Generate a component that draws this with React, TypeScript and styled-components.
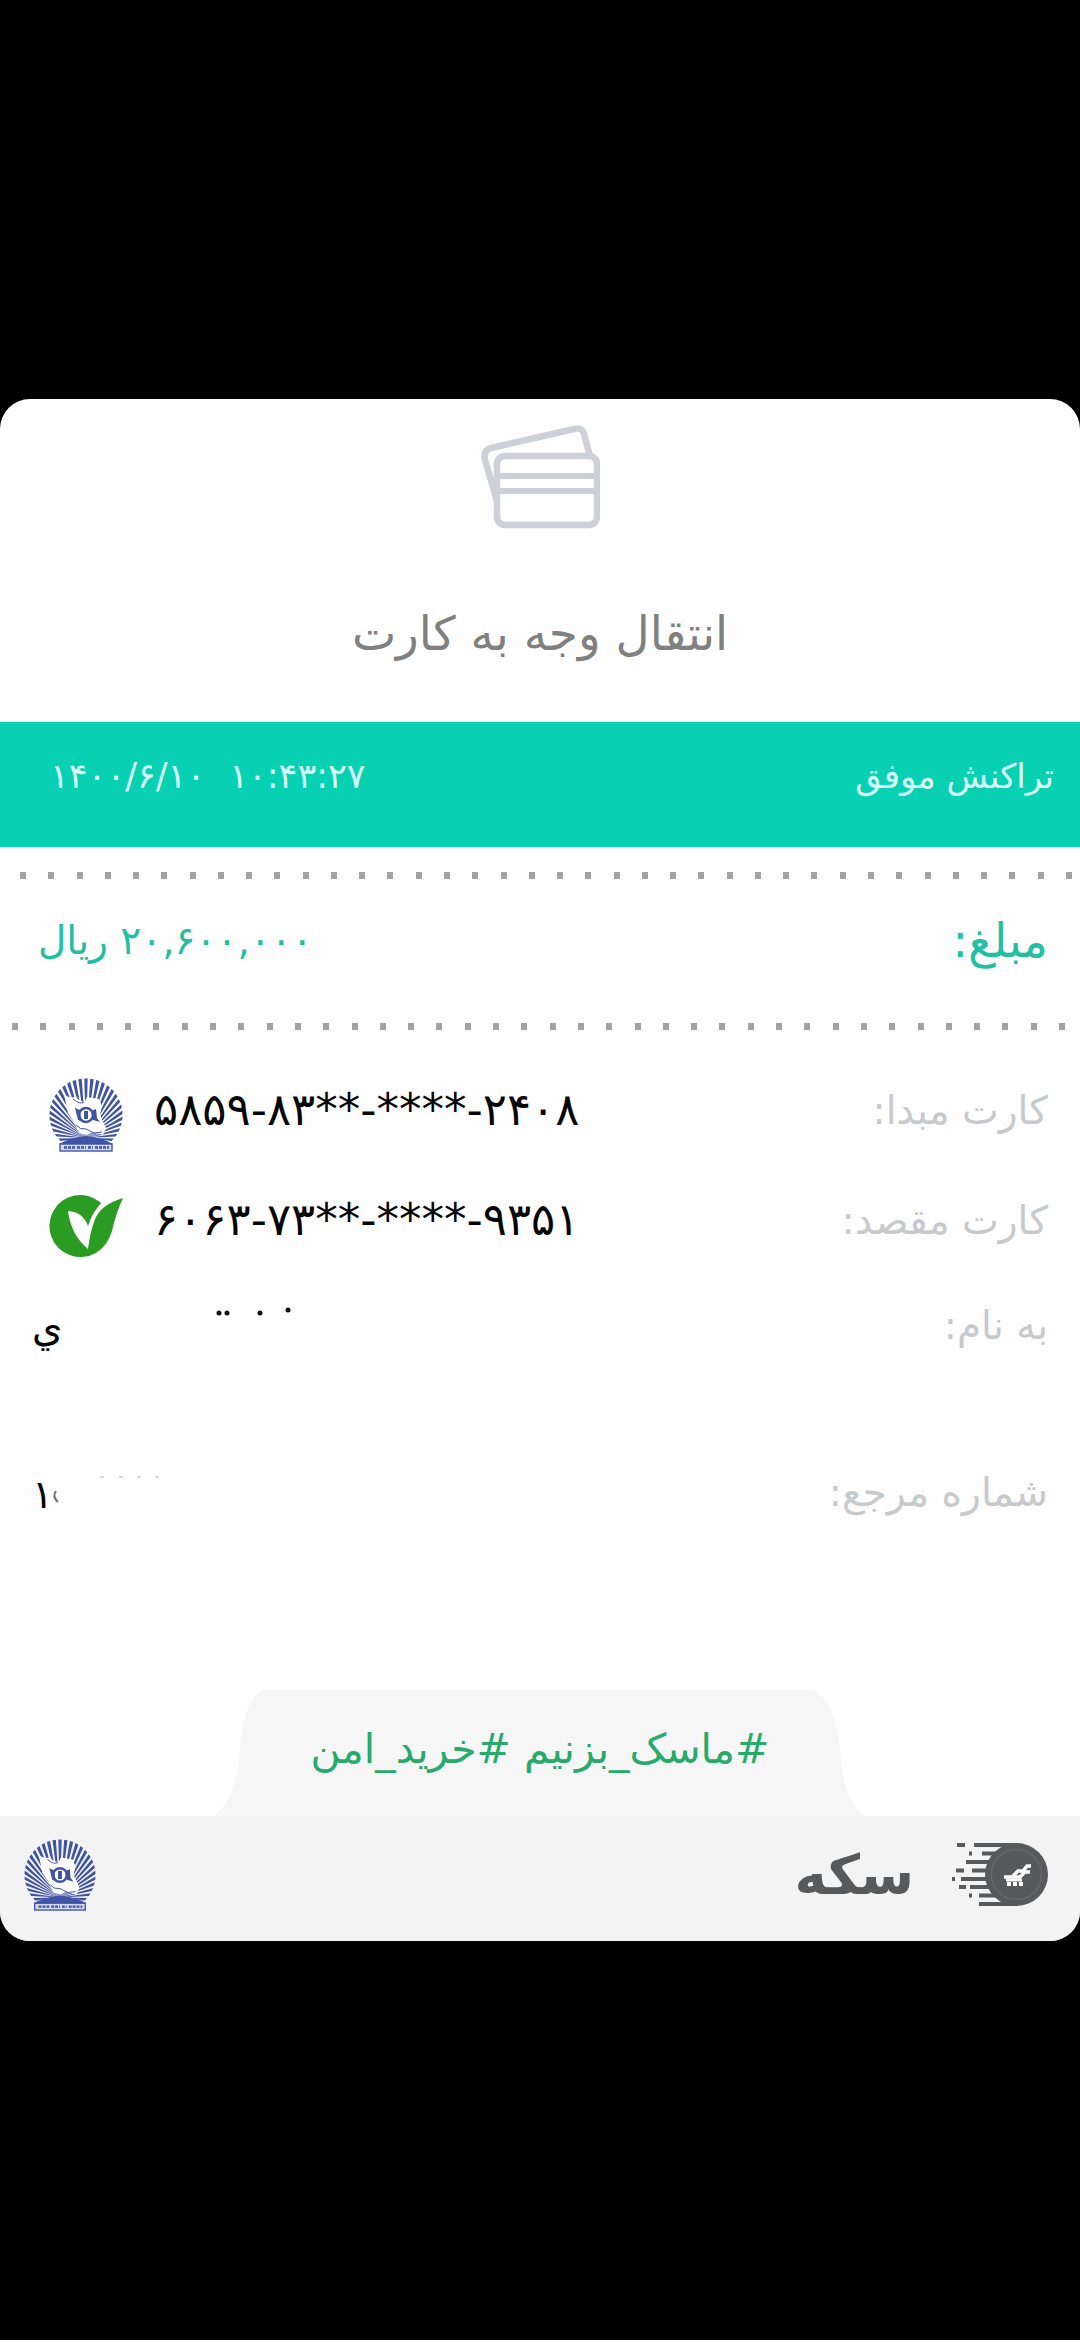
import React from "react";
import styled, { createGlobalStyle } from "styled-components";

const GlobalStyle = createGlobalStyle`
  body {
    margin: 0;
    background: #000;
    font-family: "DejaVu Sans", sans-serif;
  }
`;

const Screen = styled.div`
  min-height: 100vh;
  display: flex;
  flex-direction: column;
  justify-content: center;
`;

const Receipt = styled.main`
  background: #fefefe;
  border-radius: 30px;
  overflow: hidden;
  direction: rtl;
`;

const Header = styled.header`
  display: flex;
  flex-direction: column;
  align-items: center;
  gap: 67px;
  padding: 26px 0 50px;
`;

const Title = styled.h1`
  margin: 0;
  font-size: 47px;
  line-height: 76px;
  font-weight: 400;
  color: #808080;
`;

const StatusBand = styled.section`
  display: flex;
  justify-content: space-between;
  margin-bottom: 25px;
  padding: 18px 26px 35px 50px;
  background: #08d0b2;
  color: #d8fff8;
  font-size: 34px;
  line-height: 72px;
`;

const Stamp = styled.time`
  direction: ltr;
  display: flex;
  gap: 24px;
  font-size: 35px;
`;

const DotRow = styled.div<{ $start: number; $end: number }>`
  direction: ltr;
  display: flex;
  justify-content: space-between;
  padding: 0 ${(p) => p.$end}px 0 ${(p) => p.$start}px;
`;

const Dot = styled.span`
  width: 6px;
  height: 7px;
  background: #a3a3a3;
`;

const AmountRow = styled.section`
  display: flex;
  align-items: flex-start;
  justify-content: space-between;
  padding: 22px 32px 42px 38px;
  color: #22bfa2;
  line-height: 80px;
`;

const AmountLabel = styled.span`
  font-size: 47px;
`;

const AmountValue = styled.span`
  font-size: 39px;
`;

const Details = styled.dl`
  margin: 0;
  padding: 30px 32px 76px;
`;

const Detail = styled.div<{ $height: number }>`
  display: flex;
  align-items: center;
  justify-content: space-between;
  height: ${(p) => p.$height}px;
  line-height: 60px;
`;

const Label = styled.dt`
  padding-bottom: 8px;
  color: #c8c9cc;
  font-size: 39px;
`;

const Value = styled.dd`
  margin: 0;
  direction: ltr;
  display: flex;
  align-items: center;
  color: #050505;
  font-size: 39px;
`;

const CardNumber = styled.bdo`
  padding-bottom: 10px;
  font-size: 45px;
`;

const BankLogo = styled.span`
  display: flex;
  width: 74px;
  margin: 0 31px 0 17px;
`;

const Tab = styled.div`
  position: relative;
  width: 652px;
  max-width: 100%;
  margin: 0 auto;
  padding-bottom: 8px;
  text-align: center;
  color: #27aa6b;
  font-size: 41px;
  line-height: 118px;
`;

const TabShape = styled.svg`
  position: absolute;
  inset: 0;
  width: 100%;
  height: 100%;
`;

const TabText = styled.span`
  position: relative;
`;

const Footer = styled.footer`
  display: flex;
  align-items: center;
  justify-content: space-between;
  padding: 18px 32px 25px 24px;
  background: #f3f3f3;
`;

const Brand = styled.div`
  display: flex;
  align-items: center;
  gap: 38px;
  color: #58595b;
  font-size: 55px;
  font-weight: 700;
  line-height: 82px;
`;

const CardsIcon = () => (
  <svg width="120" height="104" viewBox="0 0 120 104" fill="none" stroke="#cdd0d6" strokeWidth="6.5">
    <path d="M17 76 5 35Q3 25 11 23L94 4q8-2 10 5l6 22" />
    <rect x="17" y="31" width="100" height="69" rx="8" />
    <path d="M17 51h99M16 66h100" strokeWidth="6" />
  </svg>
);

const rim = (deg: number) => {
  const a = (deg * Math.PI) / 180;
  return `${(37 + 36.5 * Math.sin(a)).toFixed(1)} ${(37 - 36.5 * Math.cos(a)).toFixed(1)}`;
};

const rays = Array.from({ length: 29 }, (_, i) => {
  const a = -133 + (i * 266) / 28;
  return `M37 60L${rim(a - 2.7)}L${rim(a + 2.7)}Z`;
}).join("");

const Emblem = ({ size }: { size: number }) => (
  <svg width={size} height={size} viewBox="0 0 74 74">
    <path d={rays} fill="#4054a6" />
    <path d="M10 66Q20 60 37 58Q54 60 64 66Z" fill="#4054a6" />
    <path
      d="M15 16Q22 22 27 18Q30 25 36 23L38 19L50 21L53 28L51 37L57 50L54 57L43 54L38 57L30 55L25 44L19 35Z"
      fill="#fff"
    />
    <path d="M24 21q7 6 11 3M27 47q4 5 10 4l8 4 8-1" fill="none" stroke="#4054a6" strokeWidth="1" />
    <circle cx="37" cy="37" r="7" fill="none" stroke="#4054a6" strokeWidth="2.500" />
    <path d="M35 33h4v8h-4Z" fill="#4054a6" />
    <path d="M26 30l5 2 1 8 4 5-7-3ZM42 33l5-2 1 9 3 4-7-2Z" fill="#4054a6" />
    <rect x="11" y="66" width="52" height="7" fill="#d3d9ee" stroke="#4054a6" strokeWidth="1.4" />
    <path d="M15 69.500h11m2 0h9m2 0h5m2 0h14" stroke="#4054a6" strokeWidth="2.400" strokeDasharray="3 1" />
  </svg>
);

const LeafCheck = () => (
  <svg width="74" height="64" viewBox="0 0 74 64">
    <path d="M51 9A31 31 0 1 0 62 38L60 24Z" fill="#2b9c23" />
    <path d="M19 18Q34 19 39 33Q43 19 55 7L62 12L45 40L39 56Q22 42 19 18Z" fill="#fff" />
    <path d="M74 5Q50 12 45 29Q41 40 39 56L38 62Q56 58 63 38Q67 20 74 5Z" fill="#2b9c23" />
  </svg>
);

const CoinLogo = () => (
  <svg width="96" height="64" viewBox="0 0 96 64">
    <path
      d="M5 2h8M22 2h42M17 10.500h3M30 10.500h20M14 19h30M4 27.500h8M20 27.500h20M0 36h3M9 36h30M7 44h7M18 44h24M17 52.500h3M27 52.500h22M27 61h38"
      stroke="#58595b"
      strokeWidth="4"
    />
    <circle cx="64.500" cy="31.500" r="31.500" fill="#58595b" />
    <circle cx="64.500" cy="31.500" r="25" fill="none" stroke="#66676a" strokeWidth="1.500" />
    <path d="M52 34h17M61 33l5-5h5l4-5h4M68 34l5-5h5" fill="none" stroke="#fff" strokeWidth="3.500" />
    <path d="M54 37h16" stroke="#fff" strokeWidth="3" />
    <path d="M55 41h4m2 0h4m2 0h4" stroke="#fff" strokeWidth="4" />
  </svg>
);

const NameRemnants = () => (
  <svg width="240" height="60" viewBox="0 0 240 60" aria-hidden="true">
    <g fill="#111">
      <circle cx="156" cy="13" r="2.500" />
      <circle cx="164" cy="13" r="2.500" />
      <circle cx="197" cy="13" r="2.500" />
      <circle cx="225" cy="10" r="2.500" />
    </g>
  </svg>
);

const NumberRemnants = () => (
  <svg width="120" height="60" viewBox="0 0 120 60" aria-hidden="true">
    <path d="M3 24q-4 6 2 11" fill="none" stroke="#777" strokeWidth="2" />
    <path d="M47 10h4m15 0h4m14 0h4m14 0h4" stroke="#ccc" strokeWidth="1.500" />
  </svg>
);

const Remainder = styled.span`
  padding-bottom: 4px;
`;

const Dots = ({ start, end }: { start: number; end: number }) => (
  <DotRow $start={start} $end={end}>
    {Array.from({ length: 38 }, (_, i) => (
      <Dot key={i} />
    ))}
  </DotRow>
);

export default function App() {
  return (
    <Screen>
      <GlobalStyle />
      <Receipt lang="fa">
        <Header>
          <CardsIcon />
          <Title>انتقال وجه به کارت</Title>
        </Header>
        <StatusBand>
          <span>تراکنش موفق</span>
          <Stamp>
            <span>۱۴۰۰/۶/۱۰</span>
            <span>۱۰:۴۳:۲۷</span>
          </Stamp>
        </StatusBand>
        <Dots start={20} end={8} />
        <AmountRow>
          <AmountLabel>مبلغ:</AmountLabel>
          <AmountValue>۲۰,۶۰۰,۰۰۰ ریال</AmountValue>
        </AmountRow>
        <Dots start={12} end={15} />
        <Details>
          <Detail $height={110}>
            <Label>کارت مبدا:</Label>
            <Value>
              <BankLogo>
                <Emblem size={74} />
              </BankLogo>
              <CardNumber dir="ltr">۵۸۵۹-۸۳**-****-۲۴۰۸</CardNumber>
            </Value>
          </Detail>
          <Detail $height={110}>
            <Label>کارت مقصد:</Label>
            <Value>
              <BankLogo>
                <LeafCheck />
              </BankLogo>
              <CardNumber dir="ltr">۶۰۶۳-۷۳**-****-۹۳۵۱</CardNumber>
            </Value>
          </Detail>
          <Detail $height={100}>
            <Label>به نام:</Label>
            <Value>
              <Remainder>ي</Remainder>
              <NameRemnants />
            </Value>
          </Detail>
          <Detail $height={234}>
            <Label>شماره مرجع:</Label>
            <Value>
              <Remainder>۱</Remainder>
              <NumberRemnants />
            </Value>
          </Detail>
        </Details>
        <Tab>
          <TabShape viewBox="0 0 652 126" preserveAspectRatio="none">
            <path
              d="M0 126Q22 112 26 58Q30 8 50 0H598Q620 8 626 58Q630 116 652 126Z"
              fill="#f6f6f6"
            />
          </TabShape>
          <TabText>#ماسک_بزنیم #خرید_امن</TabText>
        </Tab>
        <Footer>
          <Brand>
            <CoinLogo />
            <span>سکه</span>
          </Brand>
          <Emblem size={72} />
        </Footer>
      </Receipt>
    </Screen>
  );
}
